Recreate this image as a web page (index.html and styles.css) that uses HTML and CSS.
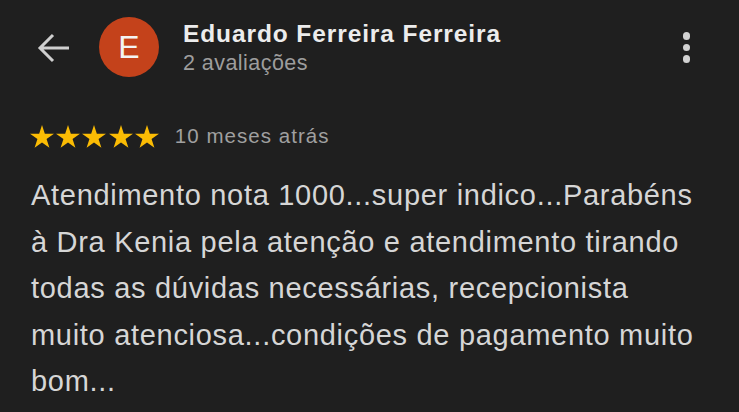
FILE: index.html
```html
<!DOCTYPE html>
<html lang="pt">
<head>
<meta charset="utf-8">
<link rel="stylesheet" href="styles.css">
</head>
<body>
<div class="review">
  <header class="header">
    <svg class="back" width="32" height="30" viewBox="0 0 32 30">
      <path d="M3 15 H32 M16 2 L3 15 L16 28" fill="none" stroke="#cfcfcf" stroke-width="3"/>
    </svg>
    <div class="avatar">E</div>
    <div class="who">
      <div class="name">Eduardo Ferreira Ferreira</div>
      <div class="count">2 avaliações</div>
    </div>
    <div class="more"><span></span><span></span><span></span></div>
  </header>
  <div class="meta">
    <div class="stars">
      <svg viewBox="0 0 24 23"><polygon points="12,0 14.83,8.71 23.98,8.71 16.57,14.09 19.41,22.79 12,17.41 4.59,22.79 7.43,14.09 0.02,8.71 9.17,8.71"/></svg>
      <svg viewBox="0 0 24 23"><polygon points="12,0 14.83,8.71 23.98,8.71 16.57,14.09 19.41,22.79 12,17.41 4.59,22.79 7.43,14.09 0.02,8.71 9.17,8.71"/></svg>
      <svg viewBox="0 0 24 23"><polygon points="12,0 14.83,8.71 23.98,8.71 16.57,14.09 19.41,22.79 12,17.41 4.59,22.79 7.43,14.09 0.02,8.71 9.17,8.71"/></svg>
      <svg viewBox="0 0 24 23"><polygon points="12,0 14.83,8.71 23.98,8.71 16.57,14.09 19.41,22.79 12,17.41 4.59,22.79 7.43,14.09 0.02,8.71 9.17,8.71"/></svg>
      <svg viewBox="0 0 24 23"><polygon points="12,0 14.83,8.71 23.98,8.71 16.57,14.09 19.41,22.79 12,17.41 4.59,22.79 7.43,14.09 0.02,8.71 9.17,8.71"/></svg>
    </div>
    <span class="when">10 meses atrás</span>
  </div>
  <p class="text">Atendimento nota 1000...super indico...Parabéns<br>à Dra Kenia pela atenção e atendimento tirando<br>todas as dúvidas necessárias, recepcionista<br>muito atenciosa...condições de pagamento muito<br>bom...</p>
</div>
</body>
</html>
```
FILE: styles.css
```css
html, body {
  margin: 0;
  padding: 0;
  background: #1f1f1f;
}
body {
  font-family: "Liberation Sans", Arial, sans-serif;
  width: 739px;
  height: 412px;
  overflow: hidden;
}
.review {
  padding: 17px 0 0 0;
}
.header {
  display: flex;
  align-items: flex-start;
  padding-left: 37px;
  padding-right: 49px;
  height: 60px;
}
.back {
  margin-top: 16px;
  flex: none;
}
.avatar {
  margin-left: 30px;
  width: 60px;
  height: 60px;
  border-radius: 50%;
  background: #c4421b;
  color: #f4f4f4;
  font-size: 32px;
  line-height: 60px;
  text-align: center;
  flex: none;
}
.who {
  margin-left: 24px;
  margin-top: 3px;
  flex: 1;
  white-space: nowrap;
}
.name {
  font-size: 24.5px;
  font-weight: bold;
  line-height: 28px;
  color: #ececec;
  letter-spacing: 0.9px;
}
.count {
  margin-top: 2px;
  font-size: 21.5px;
  line-height: 26px;
  color: #9d9d9d;
  letter-spacing: 0.45px;
}
.more {
  display: flex;
  flex-direction: column;
  gap: 4px;
  margin-top: 15px;
}
.more span {
  width: 7.5px;
  height: 7.5px;
  border-radius: 50%;
  background: #d2d2d2;
}
.meta {
  display: flex;
  align-items: center;
  margin-top: 47px;
  padding-left: 30px;
  height: 24px;
}
.stars {
  display: flex;
  gap: 2.2px;
}
.stars svg {
  width: 24px;
  height: 23px;
  fill: #fbbc04;
}
.when {
  margin-left: 16px;
  font-size: 20.5px;
  color: #a0a0a0;
  letter-spacing: 1.05px;
  white-space: nowrap;
}
.text {
  margin: 24px 0 0 31px;
  font-size: 29px;
  line-height: 46.5px;
  color: #d6d6d6;
  letter-spacing: 0.7px;
  white-space: nowrap;
}
```
